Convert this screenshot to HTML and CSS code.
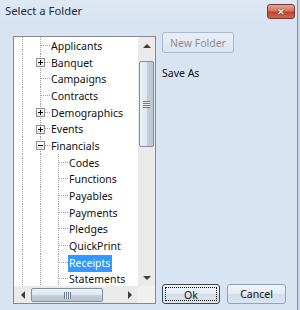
FILE: index.html
```html
<!DOCTYPE html>
<html lang="en">
<head>
    <meta charset="UTF-8">
    <link rel="stylesheet" href="styles.css">
</head>
<body>
    <div class="janela">
        <div class="barraTitulo">
            <span class="titulo">Select a Folder</span>
            <span class="fechar"><span class="xis">&#x2715;</span></span>
        </div>

        <div class="conteudo">
            <div class="arvoreCaixa">
                <div class="arvore">
                    <div class="linha"><span class="g v"></span><span class="g t"></span><span class="rotulo">Applicants</span></div>
                    <div class="linha"><span class="g v"></span><span class="g t"><span class="caixa mais"></span></span><span class="rotulo">Banquet</span></div>
                    <div class="linha"><span class="g v"></span><span class="g t"></span><span class="rotulo">Campaigns</span></div>
                    <div class="linha"><span class="g v"></span><span class="g t"></span><span class="rotulo">Contracts</span></div>
                    <div class="linha"><span class="g v"></span><span class="g t"><span class="caixa mais"></span></span><span class="rotulo">Demographics</span></div>
                    <div class="linha"><span class="g v"></span><span class="g t"><span class="caixa mais"></span></span><span class="rotulo">Events</span></div>
                    <div class="linha"><span class="g v"></span><span class="g t"><span class="caixa menos"></span></span><span class="rotulo">Financials</span></div>
                    <div class="linha"><span class="g v"></span><span class="g v"></span><span class="g t"></span><span class="rotulo">Codes</span></div>
                    <div class="linha"><span class="g v"></span><span class="g v"></span><span class="g t"></span><span class="rotulo">Functions</span></div>
                    <div class="linha"><span class="g v"></span><span class="g v"></span><span class="g t"></span><span class="rotulo">Payables</span></div>
                    <div class="linha"><span class="g v"></span><span class="g v"></span><span class="g t"></span><span class="rotulo">Payments</span></div>
                    <div class="linha"><span class="g v"></span><span class="g v"></span><span class="g t"></span><span class="rotulo">Pledges</span></div>
                    <div class="linha"><span class="g v"></span><span class="g v"></span><span class="g t"></span><span class="rotulo">QuickPrint</span></div>
                    <div class="linha"><span class="g v"></span><span class="g v"></span><span class="g t"></span><span class="rotulo selecionado">Receipts</span></div>
                    <div class="linha"><span class="g v"></span><span class="g v"></span><span class="g t"></span><span class="rotulo">Statements</span></div>
                </div>

                <div class="rolagemV">
                    <span class="seta"><span class="triCima"></span></span>
                    <div class="trilhaV"><div class="polegarV"><span class="pegadorV"></span></div></div>
                    <span class="seta"><span class="triBaixo"></span></span>
                </div>

                <div class="rolagemH">
                    <span class="seta"><span class="triEsq"></span></span>
                    <div class="trilhaH"><div class="polegarH"><span class="pegadorH"></span></div></div>
                    <span class="seta"><span class="triDir"></span></span>
                </div>

                <div class="canto"></div>
            </div>

            <div class="lateral">
                <button class="botao botaoNova" disabled>New Folder</button>
                <div class="salvarComo">Save As</div>
                <div class="botoes">
                    <button class="botao botaoOk"><span class="foco">Ok</span></button>
                    <button class="botao botaoCancelar">Cancel</button>
                </div>
            </div>
        </div>
    </div>
</body>
</html>
```

FILE: styles.css
```css
body {
    margin: 0;
    font-family: "Noto Sans", "Open Sans", sans-serif;
    font-size: 10.5px;
    background-color: #c9d6e8;
}

.janela {
    width: 298px;
    height: 310px;
    background-color: #d9e4f2;
    border-right: 1px solid #7f93ad;
    box-sizing: border-box;
}

.barraTitulo {
    height: 21px;
    display: flex;
    align-items: center;
    justify-content: space-between;
    padding: 0 2px 0 5px;
    background: linear-gradient(#dfe9f5, #d9e4f2);
}

.titulo {
    font-size: 11.3px;
    color: #1e2b3c;
}

.fechar {
    width: 28px;
    height: 15px;
    margin-top: 1px;
    border: 1px solid #6b3a3a;
    border-radius: 3px;
    box-sizing: border-box;
    background: linear-gradient(#e8a493 0%, #d5775f 45%, #c2432a 55%, #d06a4f 100%);
    display: flex;
    align-items: center;
    justify-content: center;
}

.xis {
    color: #fff;
    font-size: 9px;
    font-weight: bold;
    line-height: 9px;
    text-shadow: 0 0 1px #4a1a10, 0 0 1px #4a1a10;
}

.conteudo {
    display: flex;
    padding: 11px 0 0 13px;
}

.arvoreCaixa {
    margin-top: 4px;
    width: 143px;
    height: 268px;
    border: 1px solid #828790;
    box-sizing: border-box;
    background-color: #fff;
    display: grid;
    grid-template-columns: 124px 17px;
    grid-template-rows: 249px 17px;
}

.arvore {
    overflow: hidden;
    color: #111;
}

.linha {
    height: 16.67px;
    display: flex;
    align-items: stretch;
    white-space: nowrap;
}

.g {
    width: 18px;
    flex: none;
    display: flex;
    align-items: center;
    padding-left: 4px;
    box-sizing: border-box;
}

.g.v {
    background: repeating-linear-gradient(to bottom, #a0a0a0 0 1px, transparent 1px 2px) 8px 0 / 1px 100% no-repeat;
}

.g.t {
    background:
        repeating-linear-gradient(to bottom, #a0a0a0 0 1px, transparent 1px 2px) 8px 0 / 1px 100% no-repeat,
        repeating-linear-gradient(to right, #a0a0a0 0 1px, transparent 1px 2px) 9px 8px / 9px 1px no-repeat;
}

.caixa {
    width: 9px;
    height: 9px;
    border: 1px solid #8f8f8f;
    box-sizing: border-box;
    margin-top: 1px;
}

.caixa.mais {
    background:
        linear-gradient(#000, #000) center / 5px 1px no-repeat,
        linear-gradient(#000, #000) center / 1px 5px no-repeat,
        linear-gradient(#fff, #e6e6e6);
}

.caixa.menos {
    background:
        linear-gradient(#000, #000) center / 5px 1px no-repeat,
        linear-gradient(#fff, #e6e6e6);
}

.rotulo {
    padding: 0 2px 0 1px;
    line-height: 16px;
    margin-top: 1px;
    height: 17px;
}

.selecionado {
    background-color: #3399ff;
    color: #fff;
}

.rolagemV {
    grid-row: 1;
    grid-column: 2;
    display: flex;
    flex-direction: column;
    background-color: #eaeaea;
}

.rolagemH {
    grid-row: 2;
    grid-column: 1;
    display: flex;
    background-color: #eaeaea;
}

.canto {
    background-color: #f0f0f0;
}

.seta {
    width: 17px;
    height: 17px;
    flex: none;
    display: flex;
    align-items: center;
    justify-content: center;
}

.triCima {
    border-left: 4px solid transparent;
    border-right: 4px solid transparent;
    border-bottom: 4px solid #3c3c3c;
}

.triBaixo {
    border-left: 4px solid transparent;
    border-right: 4px solid transparent;
    border-top: 4px solid #3c3c3c;
}

.triEsq {
    border-top: 4px solid transparent;
    border-bottom: 4px solid transparent;
    border-right: 4px solid #3c3c3c;
}

.triDir {
    border-top: 4px solid transparent;
    border-bottom: 4px solid transparent;
    border-left: 4px solid #3c3c3c;
}

.trilhaV {
    flex: 1;
    padding: 7px 0 0 1px;
}

.polegarV {
    width: 15px;
    height: 86px;
    border: 1px solid #7d8fa5;
    border-radius: 2px;
    box-sizing: border-box;
    background: linear-gradient(to right, #eef2f7 0%, #dfe6ee 50%, #c6d0dc 51%, #b9c5d3 100%);
    display: flex;
    align-items: center;
    justify-content: center;
}

.pegadorV {
    width: 7px;
    height: 7px;
    background: repeating-linear-gradient(to bottom, #6a7a8c 0 1px, #e8eef4 1px 2px);
}

.trilhaH {
    flex: 1;
    padding-top: 2px;
}

.polegarH {
    width: 72px;
    height: 14px;
    border: 1px solid #7d8fa5;
    border-radius: 2px;
    box-sizing: border-box;
    background: linear-gradient(#eef2f7 0%, #dfe6ee 50%, #c6d0dc 51%, #b9c5d3 100%);
    display: flex;
    align-items: center;
    justify-content: center;
}

.pegadorH {
    width: 7px;
    height: 7px;
    background: repeating-linear-gradient(to right, #6a7a8c 0 1px, #e8eef4 1px 2px);
}

.lateral {
    margin-left: 6px;
    height: 272px;
    width: 125px;
    display: flex;
    flex-direction: column;
    align-items: flex-start;
}

.botao {
    font-family: "Noto Sans", "Open Sans", sans-serif;
    font-size: 10.5px;
    padding: 0;
    border: 1px solid #8ea3bd;
    border-radius: 3px;
    background: linear-gradient(#f2f6fb 0%, #e3ebf5 50%, #d3deec 51%, #dbe5f1 100%);
    color: #111;
}

.botaoNova {
    width: 72px;
    height: 21px;
    color: #8a8f96;
    border-color: #a9b8ca;
    background: linear-gradient(#e8eef6, #dce5f1);
}

.salvarComo {
    margin-top: 13px;
    color: #111;
}

.botoes {
    margin-top: auto;
    display: flex;
    gap: 7px;
}

.botaoOk {
    width: 58px;
    height: 20px;
    border-color: #3c4654;
    display: flex;
    align-items: center;
    justify-content: center;
    padding: 2px;
}

.foco {
    width: 100%;
    height: 100%;
    border: 1px dotted #000;
    box-sizing: border-box;
    line-height: 14px;
}

.botaoCancelar {
    width: 59px;
    height: 20px;
}
```
